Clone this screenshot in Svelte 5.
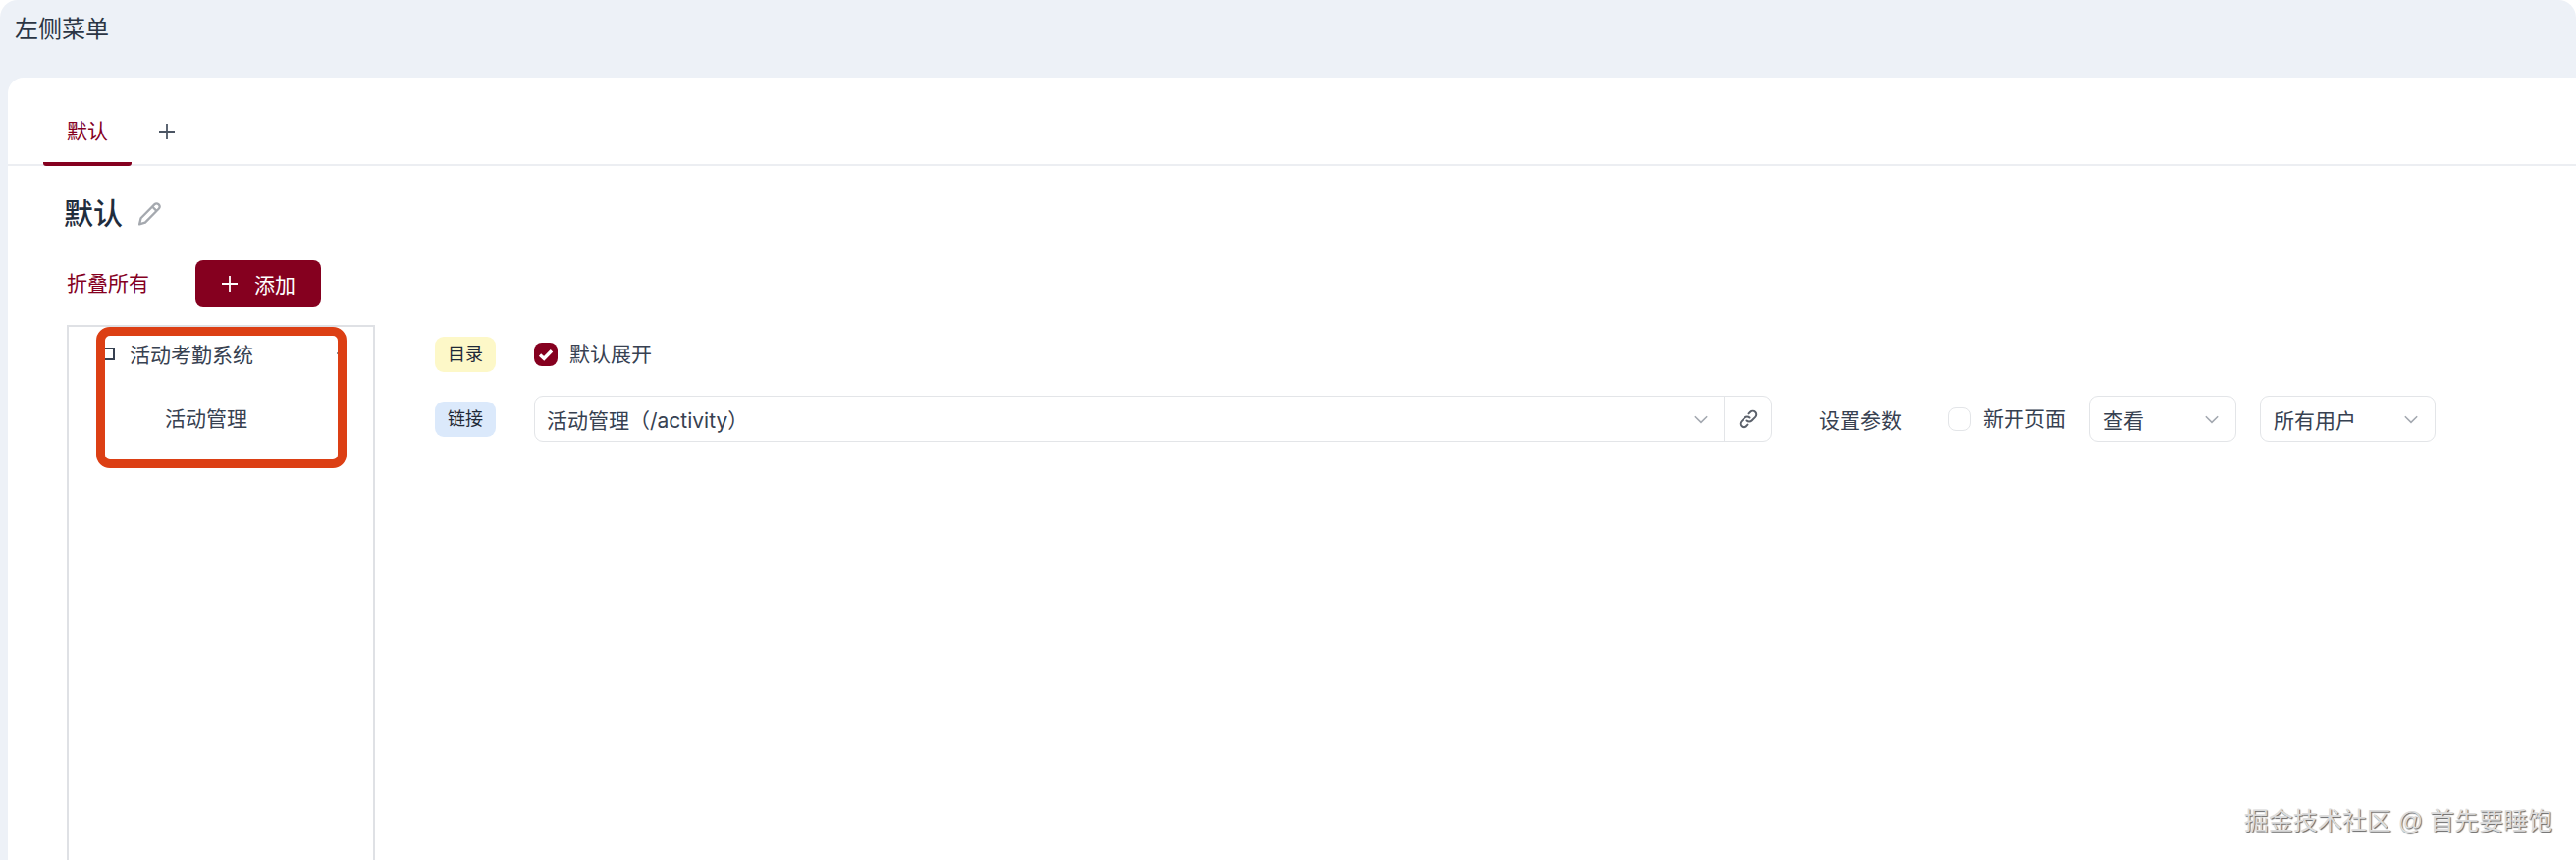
<script lang="ts">
  // 左侧菜单配置页
  const tabs = ["默认"];
  const selects = [
    { label: "查看", width: 150 },
    { label: "所有用户", width: 179 },
  ];
</script>

{#snippet chevron()}
  <svg class="chev" viewBox="0 0 16 16" width="18" height="18" fill="none" stroke="#a3a8b0" stroke-width="1.4">
    <path d="M2.5 5.5 8 11l5.5-5.5" />
  </svg>
{/snippet}

<div class="page">
  <header class="head">左侧菜单</header>

  <main class="card">
    <nav class="tabs">
      {#each tabs as t}
        <div class="tab">{t}</div>
      {/each}
      <svg class="add-tab" viewBox="0 0 18 18" width="18" height="18" stroke="#4b5563" stroke-width="1.8">
        <path d="M9 1v16M1 9h16" />
      </svg>
    </nav>

    <div class="title-row">
      <h1>默认</h1>
      <svg viewBox="0 0 24 24" width="25" height="25" fill="none" stroke="#a5a9af" stroke-width="2.2" stroke-linejoin="round">
        <path d="M2 22.5l1.4-6L16.8 3a2.6 2.6 0 0 1 3.7 0l.5.5a2.6 2.6 0 0 1 0 3.7L7.6 20.8z" />
        <path d="M14.5 5.3l4.2 4.2" />
      </svg>
    </div>

    <div class="actions">
      <span class="collapse">折叠所有</span>
      <button class="primary">
        <svg viewBox="0 0 18 18" width="18" height="18" stroke="#fff" stroke-width="1.8"><path d="M9 1v16M1 9h16" /></svg>
        添加
      </button>
    </div>

    <div class="body">
      <aside class="tree">
        <div class="node">
          <span class="sq"></span>
          <span>活动考勤系统</span>
          <span class="dash"></span>
        </div>
        <div class="leaf">活动管理</div>
        <div class="mark"></div>
      </aside>

      <section class="form">
        <div class="row first">
          <span class="tag yellow">目录</span>
          <span class="check on">
            <svg viewBox="0 0 24 24" width="24" height="24" fill="none" stroke="#fff" stroke-width="3.4"><path d="M6 12.5l4.2 3.8 7.8-8" /></svg>
          </span>
          <span class="lbl up">默认展开</span>
        </div>
        <div class="row">
          <span class="tag blue">链接</span>
          <div class="input">
            <span class="value">活动管理（/activity）</span>
            {@render chevron()}
            <span class="link">
              <svg viewBox="0 0 24 24" width="24" height="24" fill="none" stroke="#5b616b" stroke-width="2" stroke-linecap="round">
                <path d="M10.5 13.5a3.6 3.6 0 0 0 5.1 0l3.6-3.6a3.6 3.6 0 0 0-5.1-5.1l-1.6 1.6" />
                <path d="M13.5 10.5a3.6 3.6 0 0 0-5.1 0l-3.6 3.6a3.6 3.6 0 0 0 5.1 5.1l1.6-1.6" />
              </svg>
            </span>
          </div>
          <span class="params">设置参数</span>
          <span class="check"></span>
          <span class="lbl newpage up">新开页面</span>
          {#each selects as s}
            <div class="select" style="width: {s.width}px">
              <span>{s.label}</span>
              {@render chevron()}
            </div>
          {/each}
        </div>
      </section>
    </div>
  </main>

  <div class="watermark">掘金技术社区 @ 首先要睡饱</div>
</div>

<style>
  :global(body) {
    margin: 0;
    background: #fff;
  }
  .page {
    position: relative;
    height: 876px;
    display: flex;
    flex-direction: column;
    overflow: hidden;
    padding-left: 8px;
    box-sizing: border-box;
    background: #edf1f7;
    border-radius: 18px 18px 0 0;
    font-family: Inter, "Noto Sans CJK SC", sans-serif;
    font-size: 21px;
    color: #374151;
  }
  .head {
    height: 79px;
    flex: none;
    box-sizing: border-box;
    padding: 12px 7px 0;
    font-size: 24px;
    line-height: 36px;
    color: #2b3544;
  }
  .card {
    flex: 1;
    background: #fff;
    border-radius: 16px 0 0 0;
  }
  .tabs {
    height: 90px;
    box-sizing: border-box;
    display: flex;
    align-items: flex-end;
    border-bottom: 2px solid #eceef2;
  }
  .tab {
    width: 90px;
    margin-left: 36px;
    height: 50px;
    box-sizing: border-box;
    margin-bottom: -2px;
    text-align: center;
    line-height: 30px;
    font-size: 21px;
    color: #85001f;
    border-bottom: 4px solid #85001f;
    border-radius: 0 0 3px 3px;
  }
  .add-tab {
    margin: 0 0 24px 27px;
  }
  .title-row {
    display: flex;
    align-items: center;
    gap: 15px;
    height: 44px;
    margin: 26px 0 0 57px;
  }
  h1 {
    margin: 0;
    font-size: 30px;
    font-weight: 500;
    line-height: 44px;
    color: #1f2d3d;
  }
  .actions {
    display: flex;
    align-items: center;
    gap: 48px;
    margin: 26px 0 0 60px;
  }
  .collapse {
    color: #85001f;
    font-size: 21px;
    position: relative;
    top: -2px;
  }
  .primary {
    width: 128px;
    height: 48px;
    margin-left: -1px;
    display: flex;
    align-items: center;
    justify-content: center;
    gap: 16px;
    padding: 0;
    border: 0;
    border-radius: 8px;
    background: #85001f;
    color: #fff;
    font: inherit;
  }
  .body {
    display: flex;
    margin: 18px 0 0 60px;
  }
  .tree {
    position: relative;
    width: 314px;
    height: 546px;
    flex: none;
    box-sizing: border-box;
    border: 2px solid #dfe1e5;
    border-bottom: 0;
    color: #374151;
  }
  .node {
    display: flex;
    align-items: center;
    height: 54px;
    padding-left: 33px;
  }
  .sq {
    width: 14px;
    height: 13px;
    margin-right: 15px;
    box-sizing: border-box;
    border: 2px solid #374151;
  }
  .dash {
    width: 10px;
    height: 2px;
    margin-left: 85px;
    background: #8a8f98;
  }
  .leaf {
    height: 70px;
    line-height: 80px;
    padding-left: 98px;
  }
  .mark {
    position: absolute;
    left: 28px;
    top: 0;
    width: 255px;
    height: 144px;
    box-sizing: border-box;
    border: 9px solid #dc3f14;
    border-radius: 14px;
  }
  .form {
    flex: 1;
    padding: 12px 0 0 61px;
  }
  .row {
    display: flex;
    align-items: center;
    height: 47px;
  }
  .row.first {
    height: 36px;
    margin-bottom: 24px;
  }
  .tag {
    width: 62px;
    height: 36px;
    flex: none;
    border-radius: 9px;
    margin-right: 39px;
    text-align: center;
    line-height: 36px;
    font-size: 18px;
    color: #1f2937;
  }
  .yellow {
    background: #fdf8c8;
  }
  .blue {
    background: #dbe9fb;
  }
  .check {
    width: 24px;
    height: 24px;
    flex: none;
    box-sizing: border-box;
    border: 1px solid #e3e5e8;
    border-radius: 8px;
    margin-right: 12px;
  }
  .check.on {
    border: 0;
    background: #85001f;
  }
  .check svg {
    display: block;
  }
  .lbl {
    white-space: nowrap;
  }
  .lbl.up {
    position: relative;
    top: -2px;
  }
  .newpage {
    margin-right: 24px;
  }
  .input {
    width: 1261px;
    height: 47px;
    flex: none;
    box-sizing: border-box;
    display: flex;
    align-items: center;
    border: 1px solid #e3e5e8;
    border-radius: 9px;
    padding-left: 13px;
  }
  .value {
    flex: 1;
    margin-left: -1px;
  }
  .link {
    width: 47px;
    height: 100%;
    margin-left: 14px;
    display: flex;
    align-items: center;
    justify-content: center;
    border-left: 1px solid #e3e5e8;
  }
  .params {
    margin: 0 47px 0 48px;
    white-space: nowrap;
  }
  .select {
    height: 47px;
    flex: none;
    box-sizing: border-box;
    display: flex;
    align-items: center;
    justify-content: space-between;
    margin-right: 24px;
    padding: 0 15px 0 13px;
    border: 1px solid #e3e5e8;
    border-radius: 9px;
  }
  .watermark {
    position: absolute;
    right: 24px;
    bottom: 24px;
    font-size: 25px;
    line-height: 32px;
    font-family: "Liberation Sans", "Noto Sans CJK SC", sans-serif;
    color: #dcdcdc;
    text-shadow: 1px 1px 1px #666;
  }
</style>
